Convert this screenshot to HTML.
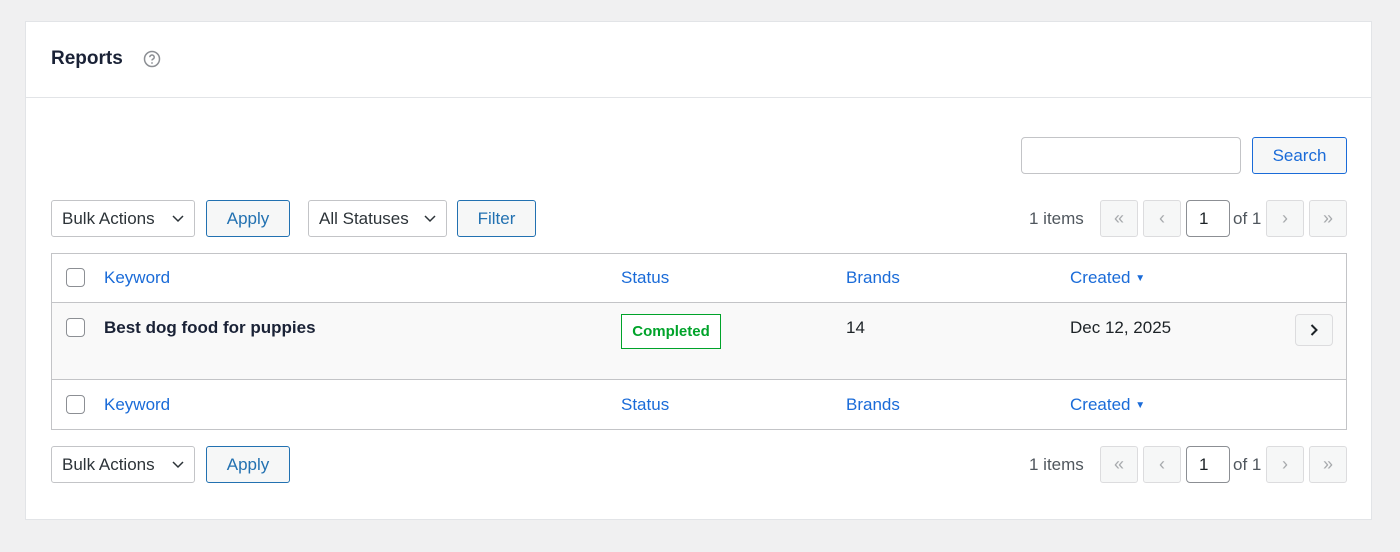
<!DOCTYPE html>
<html><head><style>
*{box-sizing:border-box;margin:0;padding:0}
body{width:1400px;height:552px;background:#f0f0f1;font-family:"Liberation Sans",Arial,sans-serif;position:relative;overflow:hidden;color:#1d2327}
.a{position:absolute}
.card{left:25px;top:21px;width:1347px;height:499px;background:#fff;border:1px solid #e2e4e7}
.btn{position:absolute;height:37px;border:1px solid #2271b1;border-radius:3px;background:#f6f7f7;color:#2271b1;font-size:17px;display:flex;align-items:center;justify-content:center}
.sel{position:absolute;height:37px;border:1px solid #c3c4c7;border-radius:3px;background:#fff;font-size:17px;display:flex;align-items:center;padding-left:10px;color:#2c3338}
.sel svg{position:absolute;right:10px;top:14px}
.pg{position:absolute;width:38px;height:37px;border:1px solid #dcdcde;border-radius:3px;background:#f6f7f7;color:#a7aaad;font-size:18px;display:flex;align-items:center;justify-content:center}
.t{position:absolute;font-size:17px}
.blue{color:#1a6bd8}
.cb{position:absolute;width:19px;height:19px;border:1px solid #8c8f94;border-radius:4px;background:#fff}
</style></head><body>
<div class="a card"></div>
<div class="t" style="left:51px;top:48px;font-size:19px;font-weight:bold;color:#1a2236">Reports</div>
<svg class="a" style="left:143px;top:50px" width="18" height="18" viewBox="0 0 18 18"><circle cx="9" cy="9" r="7.5" fill="none" stroke="#8c8f94" stroke-width="1.5"/><path d="M6.8 7.2a2.2 2.2 0 1 1 3 2c-.6.3-.8.7-.8 1.3" fill="none" stroke="#8c8f94" stroke-width="1.5"/><circle cx="9" cy="13" r="0.9" fill="#8c8f94"/></svg>
<div class="a" style="left:26px;top:97px;width:1345px;height:1px;background:#e2e4e7"></div>
<div class="a" style="left:1021px;top:137px;width:220px;height:37px;border:1px solid #c3c4c7;border-radius:4px;background:#fff"></div>
<div class="btn" style="left:1252px;top:137px;width:95px;color:#1a6bd8;border-color:#1a6bd8">Search</div>

<div class="sel" style="left:51px;top:200px;width:144px">Bulk Actions<svg width="12" height="8"><path d="M1 1l5 5 5-5" fill="none" stroke="#2c3338" stroke-width="1.5"/></svg></div>
<div class="btn" style="left:206px;top:200px;width:84px">Apply</div>
<div class="sel" style="left:308px;top:200px;width:139px">All Statuses<svg width="12" height="8"><path d="M1 1l5 5 5-5" fill="none" stroke="#2c3338" stroke-width="1.5"/></svg></div>
<div class="btn" style="left:457px;top:200px;width:79px">Filter</div>

<div class="t" style="left:1029px;top:209px;color:#50575e">1 items</div>
<div class="pg" style="left:1100px;top:200px">«</div>
<div class="pg" style="left:1143px;top:200px">‹</div>
<div class="a" style="left:1186px;top:200px;width:44px;height:37px;border:1px solid #8c8f94;border-radius:4px;font-size:17px;padding:8px 0 0 12px">1</div>
<div class="t" style="left:1233px;top:209px;color:#50575e">of 1</div>
<div class="pg" style="left:1266px;top:200px">›</div>
<div class="pg" style="left:1309px;top:200px">»</div>

<div class="a" style="left:51px;top:253px;width:1296px;height:177px;border:1px solid #c3c4c7"></div>
<div class="a" style="left:52px;top:302px;width:1294px;height:78px;background:#f9f9f9;border-top:1px solid #c3c4c7;border-bottom:1px solid #c3c4c7"></div>
<div class="cb" style="left:66px;top:268px"></div>
<div class="t blue" style="left:104px;top:268px">Keyword</div>
<div class="t blue" style="left:621px;top:268px">Status</div>
<div class="t blue" style="left:846px;top:268px">Brands</div>
<div class="t blue" style="left:1070px;top:268px">Created <span style="font-size:10px;vertical-align:2px">▼</span></div>

<div class="cb" style="left:66px;top:318px"></div>
<div class="t" style="left:104px;top:318px;font-weight:bold;color:#1a2236">Best dog food for puppies</div>
<div class="a" style="left:621px;top:314px;width:100px;height:35px;border:1px solid #00a32a;color:#00a32a;font-size:15px;font-weight:bold;display:flex;align-items:center;justify-content:center;background:#fff">Completed</div>
<div class="t" style="left:846px;top:318px">14</div>
<div class="t" style="left:1070px;top:318px">Dec 12, 2025</div>
<div class="a" style="left:1295px;top:314px;width:38px;height:32px;border:1px solid #dcdcde;border-radius:4px;background:#f6f7f7;display:flex;align-items:center;justify-content:center"><svg width="10" height="12"><path d="M2.5 1l5 5-5 5" fill="none" stroke="#1d2327" stroke-width="2"/></svg></div>

<div class="cb" style="left:66px;top:395px"></div>
<div class="t blue" style="left:104px;top:395px">Keyword</div>
<div class="t blue" style="left:621px;top:395px">Status</div>
<div class="t blue" style="left:846px;top:395px">Brands</div>
<div class="t blue" style="left:1070px;top:395px">Created <span style="font-size:10px;vertical-align:2px">▼</span></div>

<div class="sel" style="left:51px;top:446px;width:144px">Bulk Actions<svg width="12" height="8"><path d="M1 1l5 5 5-5" fill="none" stroke="#2c3338" stroke-width="1.5"/></svg></div>
<div class="btn" style="left:206px;top:446px;width:84px">Apply</div>
<div class="t" style="left:1029px;top:455px;color:#50575e">1 items</div>
<div class="pg" style="left:1100px;top:446px">«</div>
<div class="pg" style="left:1143px;top:446px">‹</div>
<div class="a" style="left:1186px;top:446px;width:44px;height:37px;border:1px solid #8c8f94;border-radius:4px;font-size:17px;padding:8px 0 0 12px">1</div>
<div class="t" style="left:1233px;top:455px;color:#50575e">of 1</div>
<div class="pg" style="left:1266px;top:446px">›</div>
<div class="pg" style="left:1309px;top:446px">»</div>
</body></html>
